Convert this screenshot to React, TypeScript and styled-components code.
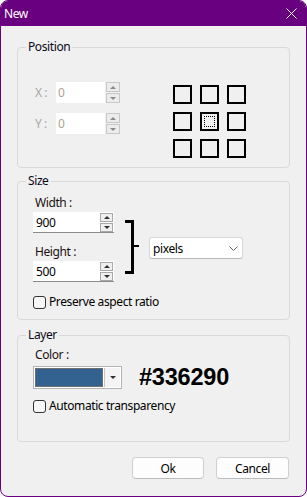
import React from "react";
import styled, { createGlobalStyle, css } from "styled-components";

const Global = createGlobalStyle`
  html, body { margin: 0; padding: 0; background: #ffffff; }
  body {
    font-family: "Noto Sans", "Open Sans", sans-serif;
    font-size: 12px;
    letter-spacing: -0.4px;
    color: #000;
  }
`;

const PURPLE = "#690080";

const Window = styled.div`
  width: 307px;
  height: 497px;
  box-sizing: border-box;
  border: 1px solid ${PURPLE};
  border-radius: 8px;
  overflow: hidden;
  background: #f0f0f0;
  display: flex;
  flex-direction: column;
`;

const TitleBar = styled.div`
  height: 25px;
  flex: none;
  background: ${PURPLE};
  color: #fff;
  display: flex;
  align-items: center;
  justify-content: space-between;
  padding-left: 3px;
  font-size: 12px;
`;

const CloseButton = styled.div`
  width: 30px;
  height: 25px;
  display: flex;
  align-items: center;
  justify-content: center;
`;

const Body = styled.div`
  flex: 1;
  display: flex;
  flex-direction: column;
  padding: 13px 16px 0;
`;

const Group = styled.fieldset<{ $h: number; $mt?: number }>`
  margin: ${(p) => p.$mt ?? 0}px 0 0;
  padding: 0;
  min-width: 0;
  box-sizing: border-box;
  height: ${(p) => p.$h}px;
  border: 1px solid #d9d9d9;
  border-radius: 4px;
`;

const Legend = styled.legend`
  margin-left: 8px;
  padding: 0 2px;
  line-height: 16px;
  font-size: 12px;
  color: #0a0a1a;
`;

/* Position */
const PosContent = styled.div`
  display: flex;
  align-items: flex-start;
  padding: 27px 0 0 17px;
`;

const Coords = styled.div`
  display: flex;
  flex-direction: column;
  gap: 10px;
`;

const CoordRow = styled.div`
  display: flex;
  align-items: center;
`;

const CoordLabel = styled.span`
  width: 21px;
  color: #a8a8a8;
`;

const SpinBox = styled.div<{ $w: number; $inset?: boolean }>`
  display: flex;
  width: ${(p) => p.$w}px;
  height: 21px;
  box-sizing: border-box;
  gap: 1px;
  ${(p) =>
    p.$inset &&
    css`
      background: #fff;
      border-bottom: 1px solid #8c8c8c;
      padding: 1px 1px 0 1px;
    `}
`;

const Field = styled.div<{ $disabled?: boolean }>`
  flex: 1;
  background: #fff;
  display: flex;
  align-items: center;
  padding-left: 2px;
  color: ${(p) => (p.$disabled ? "#b0a090" : "#000")};
`;

const Spinner = styled.div<{ $w: number }>`
  display: flex;
  flex-direction: column;
  gap: 1px;
  width: ${(p) => p.$w}px;
  flex: none;
`;

const SpinBtn = styled.div<{ $disabled?: boolean }>`
  flex: 1;
  box-sizing: border-box;
  border: 1px solid ${(p) => (p.$disabled ? "#c8c8c8" : "#a8a8a8")};
  background: ${(p) => (p.$disabled ? "#ececec" : "#efefef")};
  display: flex;
  align-items: center;
  justify-content: center;
`;

const Tri = styled.span<{ $down?: boolean; $disabled?: boolean }>`
  width: 0;
  height: 0;
  border-left: 3px solid transparent;
  border-right: 3px solid transparent;
  ${(p) =>
    p.$down
      ? css`border-top: 3px solid ${p.$disabled ? "#8a8a8a" : "#303030"};`
      : css`border-bottom: 3px solid ${p.$disabled ? "#8a8a8a" : "#303030"};`}
`;

const AnchorGrid = styled.div`
  margin: 3px 0 0 53px;
  display: grid;
  grid-template-columns: repeat(3, 19px);
  grid-auto-rows: 19px;
  gap: 8px;
`;

const AnchorCell = styled.div<{ $active?: boolean }>`
  box-sizing: border-box;
  border: 2px solid #000;
  display: flex;
  align-items: center;
  justify-content: center;
  ${(p) =>
    p.$active &&
    css`
      &::after {
        content: "";
        width: 11px;
        height: 11px;
        box-sizing: border-box;
        border: 1px dotted #000;
      }
    `}
`;

/* Size */
const SizeContent = styled.div`
  padding: 6px 0 0 15px;
  display: flex;
  flex-direction: column;
`;

const SizeRow = styled.div`
  display: flex;
  align-items: flex-start;
`;

const DimColumn = styled.div`
  display: flex;
  flex-direction: column;
`;

const FieldLabel = styled.div<{ $mt?: number }>`
  line-height: 16px;
  padding-left: 2px;
  margin-top: ${(p) => p.$mt ?? 0}px;
  margin-bottom: 1px;
  color: #1a1010;
`;

const Bracket = styled.svg`
  margin: 25px 0 0 11px;
  flex: none;
`;

const Select = styled.div`
  margin: 42px 0 0 9px;
  width: 94px;
  height: 22px;
  box-sizing: border-box;
  background: #fff;
  border: 1px solid #d6d6d6;
  border-bottom-color: #b8b8b8;
  border-radius: 3px;
  display: flex;
  align-items: center;
  justify-content: space-between;
  padding: 0 4px 0 3px;
`;

const CheckRow = styled.label<{ $mt: number }>`
  display: flex;
  align-items: center;
  gap: 3px;
  margin-top: ${(p) => p.$mt}px;
  line-height: 16px;
`;

const CheckBox = styled.span`
  width: 13px;
  height: 13px;
  box-sizing: border-box;
  border: 1px solid #333;
  border-radius: 3px;
  background: #f7f7f7;
  flex: none;
`;

/* Layer */
const LayerContent = styled.div`
  padding: 4px 0 0 15px;
  display: flex;
  flex-direction: column;
`;

const ColorRow = styled.div`
  display: flex;
  align-items: center;
  gap: 17px;
`;

const ColorCombo = styled.div`
  width: 89px;
  height: 23px;
  box-sizing: border-box;
  border: 1px solid #b4b4b4;
  background: #fff;
  padding: 1px;
  display: flex;
  gap: 1px;
`;

const Swatch = styled.div<{ $color: string }>`
  flex: 1;
  background: ${(p) => p.$color};
  border: 1px solid #6e6e6e;
`;

const ComboArrow = styled.div`
  width: 15px;
  background: #f4f4f4;
  border-left: 1px solid #c4c4c4;
  display: flex;
  align-items: center;
  justify-content: center;
`;

const HexText = styled.span`
  font-family: "Liberation Sans", Arial, sans-serif;
  font-weight: bold;
  font-size: 23.5px;
  color: #000;
  letter-spacing: -0.2px;
`;

/* Buttons */
const ButtonRow = styled.div`
  display: flex;
  justify-content: flex-end;
  gap: 12px;
  margin-top: 15px;
  padding-right: 1px;
`;

const Button = styled.button<{ $w: number }>`
  width: ${(p) => p.$w}px;
  height: 22px;
  box-sizing: border-box;
  background: #fdfdfd;
  border: 1px solid #d0d0d0;
  border-bottom-color: #bcbcbc;
  border-radius: 4px;
  font-family: inherit;
  font-size: 12px;
  letter-spacing: inherit;
  color: #000;
  padding: 0;
`;

function Spin({
  value,
  width,
  inset,
  disabled,
  spinW,
}: {
  value: string;
  width: number;
  inset?: boolean;
  disabled?: boolean;
  spinW: number;
}) {
  return (
    <SpinBox $w={width} $inset={inset}>
      <Field $disabled={disabled}>{value}</Field>
      <Spinner $w={spinW}>
        <SpinBtn $disabled={disabled}>
          <Tri $disabled={disabled} />
        </SpinBtn>
        <SpinBtn $disabled={disabled}>
          <Tri $down $disabled={disabled} />
        </SpinBtn>
      </Spinner>
    </SpinBox>
  );
}

export default function App() {
  return (
    <>
      <Global />
      <Window>
        <TitleBar>
          <span>New</span>
          <CloseButton>
            <svg width="11" height="11" viewBox="0 0 11 11">
              <path d="M0.5 0.5 L10.5 10.5 M10.5 0.5 L0.5 10.5" stroke="#fff" strokeWidth="1" />
            </svg>
          </CloseButton>
        </TitleBar>
        <Body>
          <Group $h={129}>
            <Legend>Position</Legend>
            <PosContent>
              <Coords>
                <CoordRow>
                  <CoordLabel>X :</CoordLabel>
                  <Spin value="0" width={64} disabled spinW={14} />
                </CoordRow>
                <CoordRow>
                  <CoordLabel>Y :</CoordLabel>
                  <Spin value="0" width={64} disabled spinW={14} />
                </CoordRow>
              </Coords>
              <AnchorGrid>
                {Array.from({ length: 9 }).map((_, i) => (
                  <AnchorCell key={i} $active={i === 4} />
                ))}
              </AnchorGrid>
            </PosContent>
          </Group>

          <Group $h={147} $mt={5}>
            <Legend>Size</Legend>
            <SizeContent>
              <SizeRow>
                <DimColumn>
                  <FieldLabel>Width :</FieldLabel>
                  <Spin value="900" width={81} inset spinW={13} />
                  <FieldLabel $mt={11}>Height :</FieldLabel>
                  <Spin value="500" width={81} inset spinW={13} />
                </DimColumn>
                <Bracket width="15" height="54" viewBox="0 0 15 54">
                  <rect x="0" y="0" width="9" height="3" fill="#000" />
                  <rect x="6" y="0" width="3" height="54" fill="#000" />
                  <rect x="0" y="51" width="9" height="3" fill="#000" />
                  <rect x="9" y="25" width="5" height="2" fill="#000" />
                </Bracket>
                <Select>
                  <span>pixels</span>
                  <svg width="9" height="5" viewBox="0 0 9 5">
                    <path d="M0.5 0.5 L4.5 4.5 L8.5 0.5" fill="none" stroke="#606060" strokeWidth="1" />
                  </svg>
                </Select>
              </SizeRow>
              <CheckRow $mt={12}>
                <CheckBox />
                <span>Preserve aspect ratio</span>
              </CheckRow>
            </SizeContent>
          </Group>

          <Group $h={115} $mt={7}>
            <Legend>Layer</Legend>
            <LayerContent>
              <FieldLabel>Color :</FieldLabel>
              <ColorRow>
                <ColorCombo>
                  <Swatch $color="#336290" />
                  <ComboArrow>
                    <Tri $down />
                  </ComboArrow>
                </ColorCombo>
                <HexText>#336290</HexText>
              </ColorRow>
              <CheckRow $mt={7}>
                <CheckBox />
                <span>Automatic transparency</span>
              </CheckRow>
            </LayerContent>
          </Group>

          <ButtonRow>
            <Button $w={72}>Ok</Button>
            <Button $w={73}>Cancel</Button>
          </ButtonRow>
        </Body>
      </Window>
    </>
  );
}
